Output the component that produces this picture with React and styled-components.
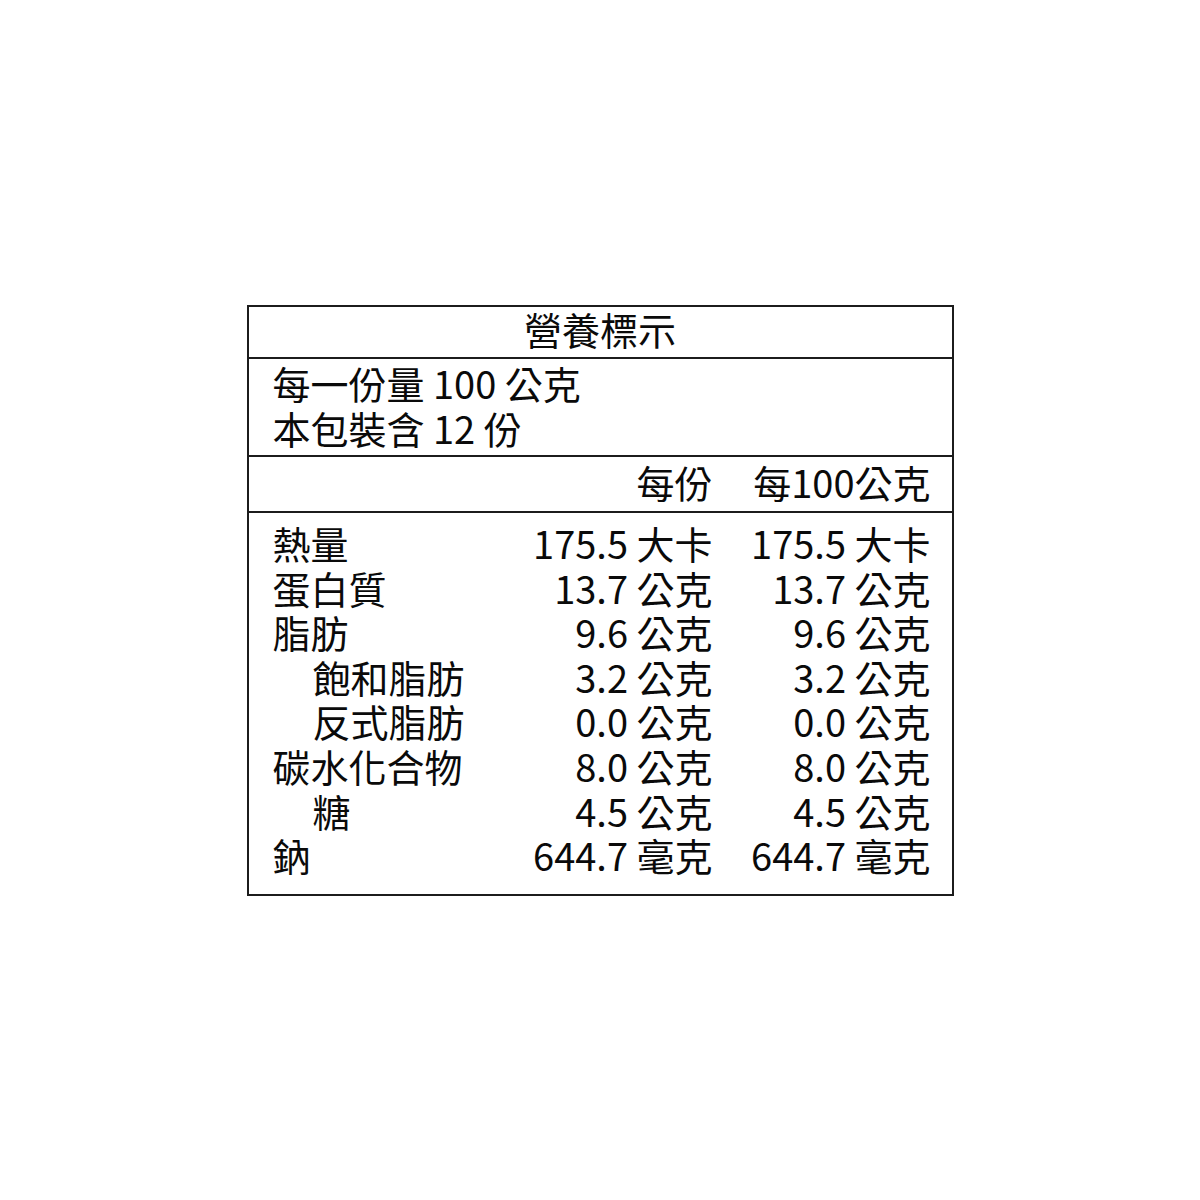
import React from "react";
import styled, { createGlobalStyle } from "styled-components";

const Global = createGlobalStyle`
  html, body { margin: 0; padding: 0; background: #fff; }
  body { font-family: "Noto Sans CJK TC", "Noto Sans", sans-serif; color: #0a0a0a; }
`;

const Page = styled.div`
  width: 1200px;
  box-sizing: border-box;
  padding-top: 305px;
  display: flex;
  justify-content: center;
`;

const Label = styled.div`
  width: 707px;
  box-sizing: border-box;
  border: 2px solid #1c1c1c;
  font-size: 38px;
  line-height: 44.6px;
`;

const Section = styled.div`
  border-top: ${(p) => (p.$first ? "none" : "2px solid #1c1c1c")};
  padding: ${(p) => p.$pad || "0"};
  height: ${(p) => p.$h || "auto"};
  box-sizing: border-box;
`;

const Title = styled.div`
  text-align: center;
`;

const Line = styled.div`
  padding-left: 24px;
  white-space: pre;
`;

const Grid = styled.div`
  display: grid;
  grid-template-columns: 1fr 200px 218px;
  padding-right: 21px;
`;

const Cell = styled.div`
  text-align: ${(p) => (p.$right ? "right" : "left")};
  padding-left: ${(p) => (p.$indent ? "64px" : p.$right ? "0" : "24px")};
  white-space: pre;
`;

const rows = [
  ["熱量", "175.5 大卡", "175.5 大卡"],
  ["蛋白質", "13.7 公克", "13.7 公克"],
  ["脂肪", "9.6 公克", "9.6 公克"],
  ["飽和脂肪", "3.2 公克", "3.2 公克", true],
  ["反式脂肪", "0.0 公克", "0.0 公克", true],
  ["碳水化合物", "8.0 公克", "8.0 公克"],
  ["糖", "4.5 公克", "4.5 公克", true],
  ["鈉", "644.7 毫克", "644.7 毫克"],
];

export default function App() {
  return (
    <Page>
      <Global />
      <Label>
        <Section $first $h="50px">
          <Title>營養標示</Title>
        </Section>
        <Section $h="98px" $pad="2px 0 0">
          <Line>每一份量 100 公克</Line>
          <Line>本包裝含 12 份</Line>
        </Section>
        <Section $h="56px" $pad="3px 0 0">
          <Grid>
            <Cell />
            <Cell $right>每份</Cell>
            <Cell $right>每100公克</Cell>
          </Grid>
        </Section>
        <Section $pad="8px 0 16px">
          <Grid>
            {rows.map(([name, a, b, indent]) => (
              <React.Fragment key={name}>
                <Cell $indent={indent}>{name}</Cell>
                <Cell $right>{a}</Cell>
                <Cell $right>{b}</Cell>
              </React.Fragment>
            ))}
          </Grid>
        </Section>
      </Label>
    </Page>
  );
}
